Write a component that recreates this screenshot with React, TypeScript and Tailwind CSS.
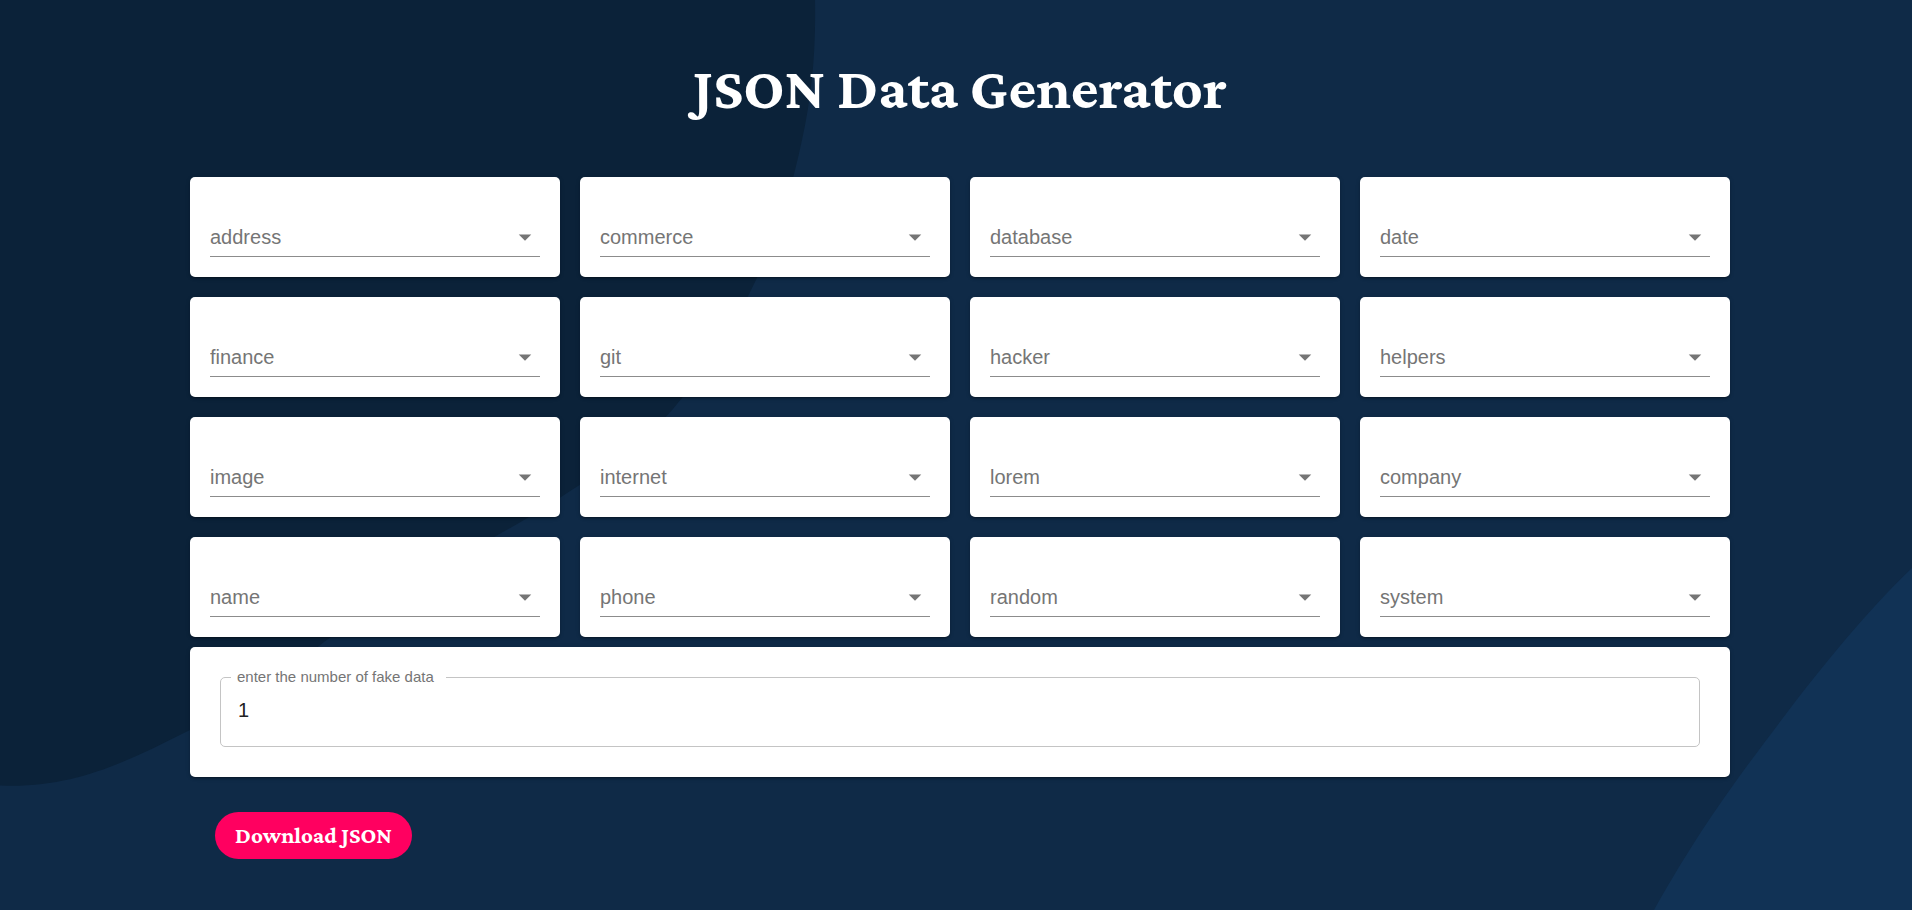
import { useState } from "react";

const categories = [
  "address", "commerce", "database", "date",
  "finance", "git", "hacker", "helpers",
  "image", "internet", "lorem", "company",
  "name", "phone", "random", "system",
];

const cardShadow =
  "shadow-[0_3px_1px_-2px_rgba(0,0,0,0.2),0_2px_2px_0_rgba(0,0,0,0.14),0_1px_5px_0_rgba(0,0,0,0.12)]";

function Backdrop() {
  return (
    <svg
      aria-hidden="true"
      className="absolute inset-0 -z-10 h-full w-full"
      viewBox="0 0 1912 910"
      preserveAspectRatio="none"
    >
      <path
        fill="#0b2239"
        d="M0 0H815C816 50 812 95 802 140C790 196 776 240 754 284C732 330 708 368 673 409C640 447 583 484 529 517C461 557 392 592 324 642C282 676 240 706 190 730C130 760 75 789 0 785.500Z"
      />
      <path
        fill="#113255"
        d="M1912 568C1868 610 1824 664 1786 714C1732 785 1698 832 1654 910H1912Z"
      />
    </svg>
  );
}

function CategorySelect({ name }: { name: string }) {
  const [value, setValue] = useState("");
  return (
    <div className={`rounded-[5px] bg-white p-5 ${cardShadow}`}>
      <div className="relative flex h-[60px] items-end border-b border-[#8c8c8c] text-[#757575]">
        <select
          aria-label={name}
          value={value}
          onChange={(e) => setValue(e.target.value)}
          className="h-[38px] w-full appearance-none bg-transparent pr-8 text-xl outline-none"
        >
          <option value="">{name}</option>
        </select>
        <svg
          aria-hidden="true"
          viewBox="0 0 24 24"
          className="pointer-events-none absolute right-0 bottom-1 size-[30px] fill-[#757575]"
        >
          <path d="M7 10l5 5 5-5z" />
        </svg>
      </div>
    </div>
  );
}

export default function App() {
  const [count, setCount] = useState("1");
  return (
    <div className="relative isolate min-h-screen bg-[#0f2a47] font-['Liberation_Sans',Arial,sans-serif]">
      <Backdrop />
      <main className="px-6 pb-12 xl:pr-[182px] xl:pl-[190px]">
        <h1 className="pt-[52px] text-center font-['Crimson_Pro','Liberation_Serif',serif] text-[60px] leading-[72px] font-bold text-white">
          JSON Data Generator
        </h1>
        <div className="mt-[53px] grid grid-cols-1 gap-5 sm:grid-cols-2 lg:grid-cols-4">
          {categories.map((name) => (
            <CategorySelect key={name} name={name} />
          ))}
        </div>
        <div className={`mt-2.5 rounded-[5px] bg-white p-[30px] ${cardShadow}`}>
          <div className="relative">
            <label
              htmlFor="count"
              className="absolute -top-2.5 left-[11px] bg-white pr-3 pl-1.5 text-[15px] leading-5 text-[#757575]"
            >
              enter the number of fake data
            </label>
            <input
              id="count"
              type="text"
              inputMode="numeric"
              value={count}
              onChange={(e) => setCount(e.target.value)}
              className="block h-[70px] w-full rounded-[5px] border border-[#c4c4c4] px-[17px] pb-1 text-xl text-[#212121] outline-none"
            />
          </div>
        </div>
        <button
          type="button"
          className="mt-[35px] ml-[25px] h-[47px] rounded-full bg-[#ff0060] px-5 font-['Crimson_Pro','Liberation_Serif',serif] text-[23px] font-bold text-white"
        >
          Download JSON
        </button>
      </main>
    </div>
  );
}
